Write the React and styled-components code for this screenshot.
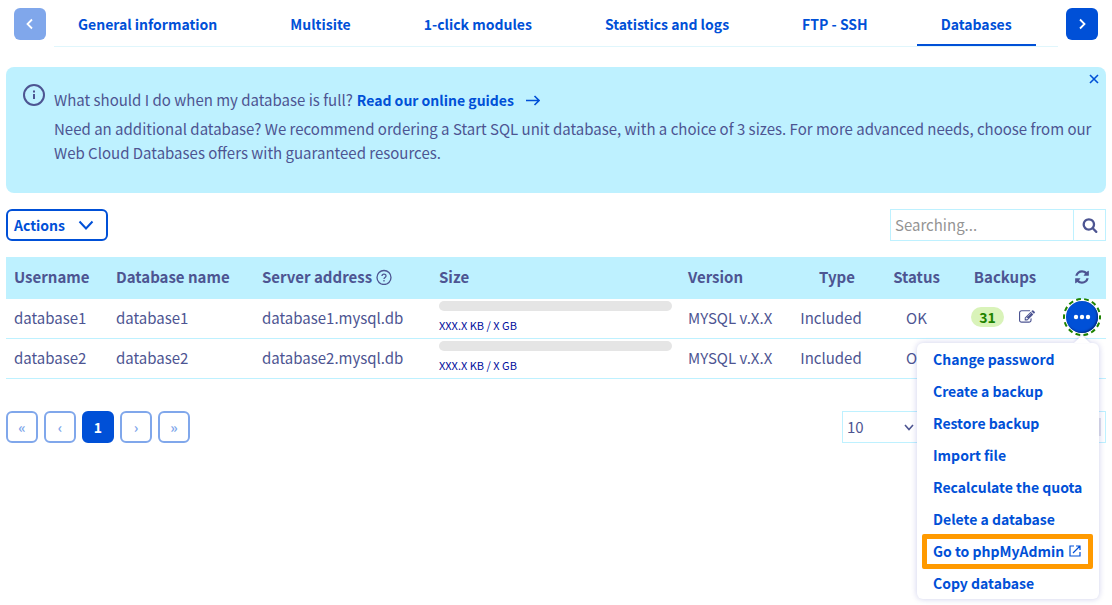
import React from "react";
import styled, { createGlobalStyle, css } from "styled-components";

const blue = "#0050d7";
const paleBlue = "#80a7eb";
const ink = "#4d5592";
const sky = "#bef1ff";
const font = '"Noto Sans CJK SC", "Noto Sans", sans-serif';

const GlobalStyle = createGlobalStyle`
  *, *::before, *::after { box-sizing: border-box; }
  body {
    margin: 0;
    background: #fff;
    color: ${ink};
    font: 400 15px/24px ${font};
  }
  button, input, select { font: inherit; color: inherit; margin: 0; }
  button { cursor: pointer; padding: 0; border: 0; background: none; }
  a { color: ${blue}; text-decoration: none; font-weight: 600; font-size: 14px; }
  svg { display: block; flex: none; }
`;

const Page = styled.main`
  min-height: 100vh;
  padding: 8px 6px 0;
`;

const TabBar = styled.div`
  display: flex;
  align-items: flex-start;
  gap: 8px;
  padding: 0 8px;
`;

const ScrollButton = styled.button`
  display: grid;
  place-items: center;
  flex: none;
  width: 32px;
  height: 32px;
  border-radius: 6px;
  color: #fff;
  background: ${(p) => (p.disabled ? paleBlue : blue)};
`;

const Tabs = styled.nav`
  display: flex;
  flex: 1;
  gap: 25px;
  min-width: 0;
  border-bottom: 1px solid #e0f6fc;
`;

const Tab = styled.a`
  padding: 4px 24px 8px;
  white-space: nowrap;
  border-bottom: 2px solid ${(p) => (p.$active ? blue : "transparent")};
`;

const Notice = styled.section`
  position: relative;
  display: flex;
  gap: 8px;
  margin-top: 20px;
  padding: 16px 12px 28px 16px;
  border-radius: 8px;
  background: ${sky};
`;

const NoticeBody = styled.div`
  padding-top: 5px;
  p { margin: 0; }
`;

const NoticeLead = styled.div`
  display: flex;
  align-items: center;
  gap: 4px;
  margin-bottom: 5px;
  a { display: flex; align-items: center; gap: 12px; }
`;

const CloseButton = styled.button`
  position: absolute;
  top: 4px;
  right: 4px;
  display: grid;
  place-items: center;
  width: 16px;
  height: 16px;
  color: ${blue};
`;

const Toolbar = styled.div`
  display: flex;
  justify-content: space-between;
  margin: 16px 0;
`;

const ActionsButton = styled.button`
  display: flex;
  align-items: center;
  gap: 13px;
  height: 32px;
  padding: 0 12px 0 6px;
  border: 2px solid ${blue};
  border-radius: 6px;
  color: ${blue};
  font-size: 14px;
  font-weight: 600;
`;

const Search = styled.form`
  display: flex;
  width: 216px;
  height: 32px;
  border: 1px solid ${sky};
  input {
    flex: 1;
    min-width: 0;
    padding: 0 4px;
    border: 0;
    background: none;
  }
  input::placeholder { color: #949494; opacity: 1; }
  button {
    display: grid;
    place-items: center;
    width: 32px;
    border-left: 1px solid ${sky};
  }
`;

const Table = styled.table`
  width: 100%;
  table-layout: fixed;
  border-collapse: separate;
  border-spacing: 0;
`;

const cell = css`
  padding: 0 8px 2px;
  text-align: ${(p) => p.$align || "left"};
  white-space: nowrap;
`;

const Col = styled.col`
  width: ${(p) => p.$width};
`;

const Th = styled.th`
  ${cell}
  height: 42px;
  background: ${sky};
  font-weight: 700;
  ${(p) => p.$indent && "padding-left: 20px;"}
`;

const Td = styled.td`
  ${cell}
  height: 40px;
  border-bottom: 1px solid ${sky};
`;

const HeadingWithIcon = styled.div`
  display: flex;
  align-items: center;
  gap: 4px;
`;

const Backups = styled.div`
  display: flex;
  align-items: center;
  justify-content: center;
  gap: 15px;
  padding: 0 4px 2px 0;
`;

const Meter = styled.div`
  height: 10px;
  margin-bottom: 6px;
  border-radius: 5px;
  background: #e5e5e5;
`;

const Usage = styled.div`
  padding-bottom: 2px;
  color: #000e9c;
  font-size: 11px;
  line-height: 16px;
`;

const Badge = styled.span`
  padding: 0 8px;
  border-radius: 10px;
  line-height: 20px;
  color: #1f8300;
  background: #d9f3b9;
  font-size: 14px;
  font-weight: 700;
`;

const IconButton = styled.button`
  display: block;
  margin: ${(p) => (p.$centered ? "0 auto" : "0")};
`;

const MenuAnchor = styled.div`
  position: relative;
  width: 32px;
  margin: 0 auto 1px;
`;

const MoreButton = styled.button`
  display: grid;
  place-items: center;
  width: 32px;
  height: 32px;
  border-radius: 50%;
  color: #fff;
  background: ${blue};
  box-shadow: inset -1px -1px 2px #002a80;
`;

const FocusRing = styled.svg`
  position: absolute;
  inset: -3px;
`;

const Menu = styled.ul`
  position: absolute;
  z-index: 2;
  top: 42px;
  right: -1px;
  min-width: 182px;
  margin: 0;
  padding: 0;
  list-style: none;
  text-align: left;
  border-radius: 6px;
  background: #fff;
  box-shadow: 0 0 6px rgba(0, 14, 156, 0.2);
  &::before {
    content: "";
    position: absolute;
    top: -8px;
    right: 9px;
    border: 8px solid transparent;
    border-top: 0;
    border-bottom-color: #fff;
    filter: drop-shadow(0 -1px 1px rgba(0, 14, 156, 0.15));
  }
`;

const MenuItem = styled.li`
  position: relative;
  a {
    display: flex;
    align-items: center;
    gap: 5px;
    padding: 4px 16px;
  }
  ${(p) =>
    p.$marked &&
    css`
      &::after {
        content: "";
        position: absolute;
        inset: -1px 6px -2px 5px;
        border: 5px solid #ff9a00;
        border-radius: 2px;
        pointer-events: none;
      }
    `}
`;

const Footer = styled.div`
  display: flex;
  justify-content: space-between;
  margin-top: 32px;
`;

const Pager = styled.nav`
  display: flex;
  gap: 6px;
`;

const PageButton = styled.button`
  width: 32px;
  height: 32px;
  border: 2px solid ${(p) => (p.$current ? blue : paleBlue)};
  border-radius: 6px;
  color: ${(p) => (p.$current ? "#fff" : paleBlue)};
  background: ${(p) => (p.$current ? blue : "#fff")};
  font-size: 14px;
  font-weight: 700;
`;

const PageSize = styled.div`
  display: flex;
  width: 264px;
  height: 32px;
  border: 1px solid ${sky};
`;

const SelectBox = styled.div`
  position: relative;
  width: 78px;
  border-right: 1px solid ${sky};
  select {
    width: 100%;
    height: 30px;
    padding: 0 4px;
    border: 0;
    appearance: none;
    background: none;
  }
  svg {
    position: absolute;
    top: 11px;
    right: 6px;
    pointer-events: none;
  }
`;

const Track = styled.div`
  flex: 1;
  margin: 6px 4px;
  background: #e0e0ea;
`;

const Stroke = ({ size, box = size, width = 2, d, children }) => (
  <svg width={size} height={size} viewBox={`0 0 ${box} ${box}`} fill="none" stroke="currentColor" strokeWidth={width} aria-hidden="true">
    {d && <path d={d} />}
    {children}
  </svg>
);

const Solid = ({ size, d }) => (
  <svg width={size} height={size} viewBox="0 0 1792 1792" fill="currentColor" aria-hidden="true">
    <path d={d} />
  </svg>
);

const searchPath =
  "M1216 832q0-185-131.5-316.5t-316.5-131.5-316.5 131.5-131.5 316.5 131.5 316.5 316.5 131.5 316.5-131.5 131.5-316.5zm512 832q0 52-38 90t-90 38q-54 0-90-38l-343-342q-179 124-399 124-143 0-273.5-55.5t-225-150-150-225-55.5-273.5 55.5-273.5 150-225 225-150 273.5-55.5 273.5 55.5 225 150 150 225 55.5 273.5q0 220-124 399l343 343q37 37 37 90z";
const refreshPath =
  "M1639 1056q0 5-1 7-64 268-268 434.5t-478 166.5q-146 0-282.5-55t-243.5-157l-129 129q-19 19-45 19t-45-19-19-45v-448q0-26 19-45t45-19h448q26 0 45 19t19 45-19 45l-137 137q71 66 161 102t187 36q134 0 250-65t186-179q11-17 53-117 8-23 30-23h192q13 0 22.5 9.5t9.5 22.5zm25-800v448q0 26-19 45t-45 19h-448q-26 0-45-19t-19-45 19-45l138-138q-148-137-349-137-134 0-250 65t-186 179q-11 17-53 117-8 23-30 23h-199q-13 0-22.5-9.5t-9.5-22.5v-7q65-268 270-434.5t480-166.5q146 0 284 55.5t245 156.5l130-129q19-19 45-19t45 19 19 45z";
const editPath =
  "M888 1184l116-116-152-152-116 116v56h96v96h56zm440-720q-16-16-33 1l-350 350q-17 17-1 33t33-1l350-350q17-17 1-33zm80 594v190q0 119-84.5 203.5t-203.5 84.5h-832q-119 0-203.5-84.5t-84.5-203.5v-832q0-119 84.5-203.5t203.5-84.5h832q63 0 117 25 15 7 18 23 3 17-9 29l-49 49q-14 14-32 8-23-6-45-6h-832q-66 0-113 47t-47 113v832q0 66 47 113t113 47h832q66 0 113-47t47-113v-126q0-13 9-22l64-64q15-15 35-7t20 29zm-96-738l288 288-672 672h-288v-288zm444 132l-92 92-288-288 92-92q28-28 68-28t68 28l152 152q28 28 28 68t-28 68z";

const tabs = ["General information", "Multisite", "1-click modules", "Statistics and logs", "FTP - SSH", "Databases"];
const widths = ["102px", "146px", "177px", "auto", "101px", "100px", "71px", "106px", "48px"];
const menuItems = [
  "Change password",
  "Create a backup",
  "Restore backup",
  "Import file",
  "Recalculate the quota",
  "Delete a database",
  "Go to phpMyAdmin",
  "Copy database",
];
const databases = [
  { name: "database1", open: true },
  { name: "database2", open: false },
];
const pages = [
  { glyph: "«", label: "First page" },
  { glyph: "‹", label: "Previous page" },
  { glyph: "1", label: "Page 1", current: true },
  { glyph: "›", label: "Next page" },
  { glyph: "»", label: "Last page" },
];

function RowMenu() {
  return (
    <MenuAnchor>
      <MoreButton type="button" aria-label="Database actions" aria-expanded="true">
        <svg width="18" height="6" viewBox="0 0 18 6" fill="currentColor" aria-hidden="true">
          <circle cx="3" cy="3" r="2.2" />
          <circle cx="9" cy="3" r="2.2" />
          <circle cx="15" cy="3" r="2.2" />
        </svg>
      </MoreButton>
      <FocusRing width="38" height="38" viewBox="0 0 38 38" fill="none" pointerEvents="none" aria-hidden="true">
        <circle cx="19" cy="19" r="18" stroke="#1f8300" strokeWidth="2" strokeDasharray="4.7 3.378" strokeDashoffset="2.35" />
      </FocusRing>
      <Menu>
        {menuItems.map((item) => {
          const external = item === "Go to phpMyAdmin";
          return (
            <MenuItem key={item} $marked={external}>
              <a href="#">
                {item}
                {external && <Stroke size={12} width={1.2} d="M5 1H1v10h10V7M7 1h4v4M11 1L4 8" />}
              </a>
            </MenuItem>
          );
        })}
      </Menu>
    </MenuAnchor>
  );
}

export default function App() {
  return (
    <>
      <GlobalStyle />
      <Page>
        <TabBar>
          <ScrollButton type="button" disabled aria-label="Previous tabs">
            <Stroke size={12} d="M8 1.5L3.5 6L8 10.5" width={1.8} />
          </ScrollButton>
          <Tabs>
            {tabs.map((tab) => (
              <Tab key={tab} href="#" $active={tab === "Databases"}>
                {tab}
              </Tab>
            ))}
          </Tabs>
          <ScrollButton type="button" aria-label="Next tabs">
            <Stroke size={12} d="M4 1.5L8.5 6L4 10.5" width={1.8} />
          </ScrollButton>
        </TabBar>

        <Notice>
          <Stroke size={24}>
            <circle cx="12" cy="12" r="10" />
            <path d="M12 11v5M12 7.5v2" />
          </Stroke>
          <NoticeBody>
            <NoticeLead>
              <span>What should I do when my database is full?</span>
              <a href="#">
                Read our online guides
                <Stroke size={14} width={1.6} d="M0 7.5H13M8.5 3L13 7.5L8.5 12" />
              </a>
            </NoticeLead>
            <p>
              Need an additional database? We recommend ordering a Start SQL unit database, with a choice of 3 sizes. For
              more advanced needs, choose from our Web Cloud Databases offers with guaranteed resources.
            </p>
          </NoticeBody>
          <CloseButton type="button" aria-label="Close">
            <Stroke size={10} width={1.6} d="M1 1L9 9M9 1L1 9" />
          </CloseButton>
        </Notice>

        <Toolbar>
          <ActionsButton type="button">
            Actions
            <Stroke size={16} d="M1.5 4.5L8 11.5L14.5 4.5" />
          </ActionsButton>
          <Search>
            <input type="text" placeholder="Searching..." aria-label="Search" />
            <button type="button" aria-label="Run search">
              <Solid size={16} d={searchPath} />
            </button>
          </Search>
        </Toolbar>

        <Table>
          <colgroup>
            {widths.map((width, i) => (
              <Col key={i} $width={width} />
            ))}
          </colgroup>
          <thead>
            <tr>
              <Th>Username</Th>
              <Th>Database name</Th>
              <Th>
                <HeadingWithIcon>
                  Server address
                  <Stroke size={16} width={1.3}>
                    <circle cx="8" cy="8.5" r="7" />
                    <path d="M6 7.1C6 4.5 10 4.5 10 6.9C10 8.5 8 8.5 8 10.1M8 11.1V12.5" />
                  </Stroke>
                </HeadingWithIcon>
              </Th>
              <Th>Size</Th>
              <Th>Version</Th>
              <Th $align="center" $indent>Type</Th>
              <Th $align="center">Status</Th>
              <Th $align="center">Backups</Th>
              <Th $align="center">
                <IconButton type="button" $centered aria-label="Refresh">
                  <Solid size={16} d={refreshPath} />
                </IconButton>
              </Th>
            </tr>
          </thead>
          <tbody>
            {databases.map(({ name, open }) => (
              <tr key={name}>
                <Td>{name}</Td>
                <Td>{name}</Td>
                <Td>{name}.mysql.db</Td>
                <Td>
                  <Meter />
                  <Usage>XXX.X KB / X GB</Usage>
                </Td>
                <Td>MYSQL v.X.X</Td>
                <Td $align="center">Included</Td>
                <Td $align="center">OK</Td>
                <Td $align="center">
                  {open && (
                    <Backups>
                      <Badge>31</Badge>
                      <IconButton type="button" aria-label="Edit backups">
                        <Solid size={16} d={editPath} />
                      </IconButton>
                    </Backups>
                  )}
                </Td>
                <Td $align="center">{open && <RowMenu />}</Td>
              </tr>
            ))}
          </tbody>
        </Table>

        <Footer>
          <Pager aria-label="Pages">
            {pages.map(({ glyph, label, current }) => (
              <PageButton key={label} type="button" aria-label={label} $current={current}>
                {glyph}
              </PageButton>
            ))}
          </Pager>
          <PageSize>
            <SelectBox>
              <select aria-label="Rows per page" defaultValue="10">
                <option>10</option>
              </select>
              <Stroke size={10} width={1.6} d="M1 2L5 6.5L9 2" />
            </SelectBox>
            <Track />
          </PageSize>
        </Footer>
      </Page>
    </>
  );
}
